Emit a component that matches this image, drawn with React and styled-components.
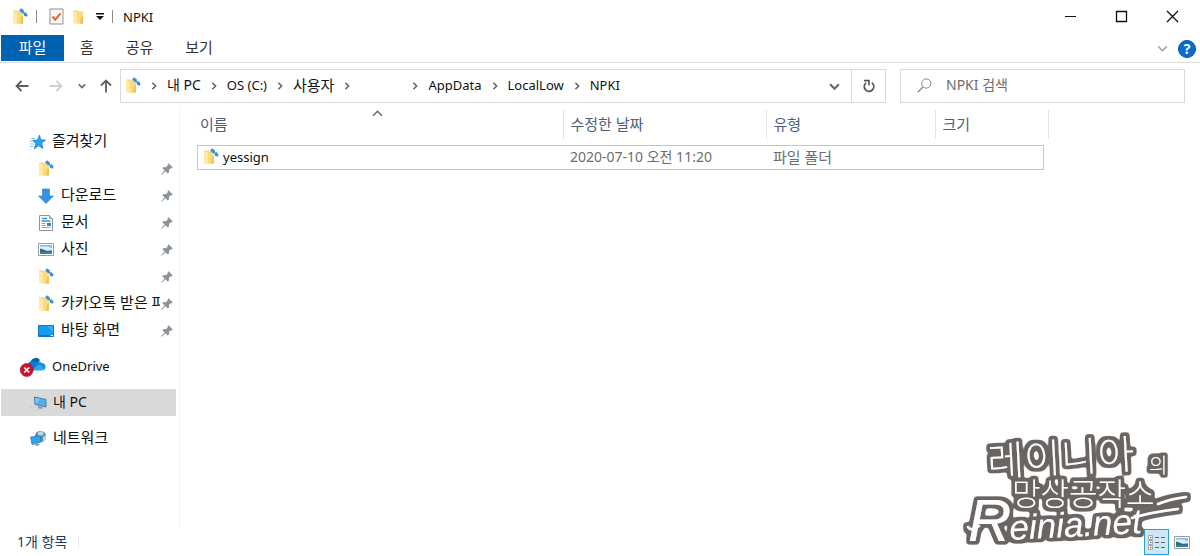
import React, { useState } from "react";
import styled, { createGlobalStyle } from "styled-components";

const GlobalStyle = createGlobalStyle`
  * {
    box-sizing: border-box;
  }

  body {
    margin: 0;
    background: #fff;
    color: #111;
    font-family: "Noto Sans", "Noto Sans CJK KR", sans-serif;
    font-size: 13px;
    line-height: 20px;
  }

  button {
    padding: 0;
    border: 0;
    background: none;
    color: inherit;
    font: inherit;
  }

  svg {
    display: block;
    flex: none;
  }
`;

const Explorer = styled.div`
  position: relative;
  display: flex;
  flex-direction: column;
  min-height: 100vh;
`;

// hangul is set larger than the latin text beside it
const Ko = styled.span`
  font-size: 15px;
`;

const Mixed = styled.span`
  font-size: 14px;
`;

const TitleBar = styled.header`
  display: flex;
  align-items: center;
  height: 35px;
  padding: 0 21px 2px 12px;
`;

const QuickTools = styled.div`
  display: flex;
  align-items: center;
  gap: 8px;
`;

const Separator = styled.span`
  width: 1px;
  height: 13px;
  margin-right: 4px;
  background: #8c8c8c;
`;

const Title = styled.h1`
  flex: 1;
  margin: 0 0 0 6px;
  font-size: 13px;
  font-weight: 400;
`;

const WindowButtons = styled.div`
  display: flex;
  gap: 38px;
`;

const Menu = styled.nav`
  display: flex;
  align-items: center;
  height: 28px;
  padding: 0 4px 0 1px;
  border-bottom: 1px solid #dcdcdc;
`;

const MenuTab = styled.button`
  align-self: flex-start;
  width: ${(p) => p.$width}px;
  height: 26px;
  padding-bottom: 2px;
  background: ${(p) => (p.$active ? "#0063b1" : "transparent")};
  color: ${(p) => (p.$active ? "#fff" : "#333")};
`;

const MenuRight = styled.div`
  display: flex;
  align-items: center;
  gap: 10px;
  margin-left: auto;
`;

const HelpButton = styled.button`
  width: 18px;
  height: 18px;
  border: 1px solid #07539c;
  border-radius: 50%;
  background: #0a6cce;
  color: #fff;
  font-size: 14px;
  font-weight: 700;
  line-height: 16px;
`;

const Toolbar = styled.div`
  display: flex;
  align-items: center;
  padding: 6px 15px 7px 5px;
`;

const History = styled.div`
  display: flex;
  align-items: center;
`;

const HistoryButton = styled.button`
  display: flex;
  justify-content: center;
  width: ${(p) => p.$width}px;
`;

const AddressBar = styled.div`
  display: flex;
  flex: 1;
  align-items: stretch;
  height: 34px;
  margin-right: 14px;
  border: 1px solid #d9d9d9;
`;

const Crumbs = styled.div`
  display: flex;
  flex: 1;
  align-items: center;
  padding: 0 0 2px 4px;
`;

const Crumb = styled.button`
  height: 24px;
  min-width: ${(p) => (p.$blank ? 42 : 0)}px;
  white-space: nowrap;
`;

const CrumbArrow = styled.span`
  display: flex;
  justify-content: center;
  width: 26px;
  padding-top: 2px;
`;

const AddressButton = styled.button`
  display: flex;
  align-items: center;
  justify-content: center;
  width: 34px;
  border-left: 1px solid ${(p) => (p.$divided ? "#d9d9d9" : "transparent")};
`;

const SearchBox = styled.label`
  display: flex;
  flex: 0 1 285px;
  align-items: center;
  gap: 14px;
  height: 34px;
  padding: 0 16px 2px;
  border: 1px solid #d9d9d9;
`;

const SearchInput = styled.input`
  flex: 1;
  min-width: 0;
  padding: 0;
  border: 0;
  outline: 0;
  font: inherit;
  font-size: 14px;

  &::placeholder {
    color: #6d6d6d;
    opacity: 1;
  }
`;

const Body = styled.div`
  display: flex;
  flex: 1;
`;

const Sidebar = styled.nav`
  display: flex;
  flex: none;
  flex-direction: column;
  gap: 9px;
  width: 180px;
  padding: 18px 3px 0 1px;
  border-right: 1px solid #f0f0f0;
`;

const TreeRow = styled.a`
  display: flex;
  align-items: center;
  gap: ${(p) => (p.$child ? 7 : 6)}px;
  height: 27px;
  padding-left: ${(p) => (p.$child ? 37 : 29)}px;
  padding-right: 3px;
  background: ${(p) => (p.$selected ? "#d9d9d9" : "transparent")};
  color: inherit;
  text-decoration: none;
`;

const TreeLabel = styled.span`
  flex: 1;
  margin-right: -6px;
  padding-bottom: 2px;
  overflow: hidden;
  white-space: nowrap;
`;

const CloudIcon = styled.span`
  margin-left: -10px;
`;

const Main = styled.main`
  flex: 1;
  min-width: 0;
  padding-left: 17px;
`;

const FileTable = styled.table`
  width: 851px;
  max-width: 100%;
  border-collapse: collapse;
  table-layout: fixed;
`;

const HeadCell = styled.th`
  position: relative;
  width: ${(p) => p.$width}px;
  height: 29px;
  padding: 0 0 1px ${(p) => (p.$first ? 3 : 7)}px;
  border-right: 1px solid #e3e3e3;
  color: #4c607a;
  font-size: 14px;
  font-weight: 400;
  text-align: left;
`;

const SortMark = styled.span`
  position: absolute;
  top: -2px;
  left: 48%;
`;

const Cell = styled.td`
  padding: 6px ${(p) => (p.$last ? 4 : 0)}px 0 0;
`;

const CellBox = styled.div`
  display: flex;
  align-items: center;
  gap: 4px;
  height: 25px;
  padding: 0 0 2px ${(p) => (p.$first ? 5 : 7)}px;
  border: solid #99d1ff;
  border-width: 1px ${(p) => (p.$last ? 1 : 0)}px 1px
    ${(p) => (p.$first ? 1 : 0)}px;
  color: ${(p) => (p.$first ? "#111" : "#6d6d6d")};
  font-size: ${(p) => (p.$first ? 13 : 14)}px;
`;

const StatusBar = styled.footer`
  display: flex;
  align-items: center;
  height: 28px;
  padding: 0 10px 0 17px;
`;

const Count = styled.span`
  padding-right: 11px;
  border-right: 1px solid #ececec;
  color: #1e395b;
  font-size: 14px;
  line-height: 14px;
`;

const ViewButtons = styled.div`
  display: flex;
  align-items: center;
  gap: 5px;
  margin-left: auto;
`;

const ViewButton = styled.button`
  display: flex;
  align-items: center;
  justify-content: center;
  width: ${(p) => (p.$active ? 25 : 16)}px;
  height: 26px;
  border: ${(p) => (p.$active ? "1px solid #26a0da" : "0")};
  background: ${(p) => (p.$active ? "#cbe8f6" : "transparent")};
`;

const Watermark = styled.svg`
  position: absolute;
  right: 8px;
  bottom: 6px;
  overflow: visible;
  pointer-events: none;
`;

const FolderIcon = ({ plain }) => (
  <svg width="16" height="17" viewBox="0 0 16 17">
    <path d="M1 2.5h5l1 1h4v12H3l-2-1z" fill="#f6d680" />
    <path d="M1 3l4 1.5V16L1 14.5z" fill="#ffe9a6" />
    <path d="M5 5h3.5L11 3.5v12H5z" fill="#fbdc7c" />
    <path d="M9 9l2-1v7.5H8z" fill="#eec255" />
    {!plain && (
      <g fill="#3d8fdc">
        <path d="M7 2.5L9 .3l3 2.2-.7 3L9.500 4.800z" />
        <path d="M11.500 5.500l2-1.500 2.300 3-1.500 1.700-2.300-.9z" />
        <path d="M10.500 3.500l3 3" stroke="#3d8fdc" strokeWidth="1.200" />
      </g>
    )}
  </svg>
);

const CheckIcon = () => (
  <svg width="15" height="17" viewBox="0 0 15 17">
    <path d="M1 1h13v15H1z" fill="#f7f7f7" stroke="#8f8f8f" />
    <path d="M3.5 8.5l2.7 3.2 5.3-6.4" fill="none" stroke="#e8622c" strokeWidth="2" />
  </svg>
);

const CustomizeIcon = () => (
  <svg width="8" height="7" viewBox="0 0 8 7">
    <path d="M0 0h8v1.5H0zM0 3h8L4 7z" fill="#111" />
  </svg>
);

const Chevron = ({ dir = "down", size = 9, color = "#666", weight = 1.5 }) => {
  const turn = { down: 0, left: 90, up: 180, right: -90 }[dir];
  return (
    <svg width={size} height={size} viewBox="0 0 10 10">
      <path
        d="M1 3l4 4 4-4"
        fill="none"
        stroke={color}
        strokeWidth={weight}
        transform={`rotate(${turn} 5 5)`}
      />
    </svg>
  );
};

const Arrow = ({ dir = "left", color = "#5e5e5e" }) => {
  const turn = { left: 0, up: 90, right: 180 }[dir];
  return (
    <svg width="14" height="14" viewBox="0 0 14 14">
      <path
        d="M13.5 7H1.5M6.5 2L1.5 7l5 5"
        fill="none"
        stroke={color}
        strokeWidth="1.8"
        transform={`rotate(${turn} 7 7)`}
      />
    </svg>
  );
};

const RefreshIcon = () => (
  <svg width="12" height="14" viewBox="0 0 12 14">
    <path d="M8.8 3.6A4.8 4.8 0 1 1 3 3.8" fill="none" stroke="#555" strokeWidth="1.7" />
    <path d="M1 1.6h5v5" fill="none" stroke="#555" strokeWidth="1.6" />
  </svg>
);

const SearchIcon = () => (
  <svg width="15" height="15" viewBox="0 0 15 15" fill="none" stroke="#888">
    <circle cx="9.3" cy="5.5" r="4.6" />
    <path d="M6 9l-5.3 5.2" strokeWidth="1.3" />
  </svg>
);

const PinIcon = () => (
  <svg width="12" height="12" viewBox="0 0 12 12">
    <path d="M7.5 0.2L11.8 4.5 10.5 5.4 9.7 5.2 8 7.100 8 9.6 6.8 10.6 4.400 8.200 0.8 11.8 0.2 11.200 3.600 7.400 1.4 5.200 2.500 4.100 5 4.2 6.800 2.300 6.600 1.200z" fill="#8a939c" />
  </svg>
);

const StarIcon = () => (
  <svg width="16" height="16" viewBox="0 0 16 16">
    <path d="M9.6 1l1.2 4.8 4.9.3-4 3 1.3 5.4-4.5-2.8L4.3 15l1.4-5.3L2.6 6.300l4.700-.3z" fill="#2ba0ec" stroke="#1583cf" strokeWidth=".7" />
    <path d="M1 4.500h4M0 7h3M0 10h4M0 12.500h4" stroke="#82c7f3" />
  </svg>
);

const DownloadIcon = () => (
  <svg width="16" height="16" viewBox="0 0 16 16">
    <path d="M4.500 1h7v7h4L8 15.500.5 8h4z" fill="#3592e0" stroke="#277fca" strokeWidth=".6" />
  </svg>
);

const DocumentIcon = () => (
  <svg width="16" height="16" viewBox="0 0 16 16">
    <path d="M1.500.5h10l3 3v12h-13z" fill="#fff" stroke="#8e969d" />
    <path d="M11.500.5v3h3" fill="#dce2e7" stroke="#8e969d" />
    <path d="M4 3.500h5M3.500 6h9" stroke="#3e94d4" strokeWidth="1.500" />
    <path d="M3.500 8.500h4M3.500 10.500h4M3.500 12.500h9" stroke="#8fa7ba" />
    <path d="M9 8h4v3H9z" fill="#3a83bd" />
  </svg>
);

const PictureIcon = () => (
  <svg width="16" height="13" viewBox="0 0 16 13">
    <path d="M.5.5h15v12H.5z" fill="#fff" stroke="#9b9b9b" />
    <path d="M2 2h12v9H2z" fill="#7fbdf0" />
    <path d="M2 3.500h8l4 2v2H2z" fill="#dceefa" />
    <path d="M2 5.500l3.500 1 3 1.500 5.500-.5V11H2z" fill="#356d67" />
    <path d="M2 9.300l12-.8V11H2z" fill="#397db5" />
  </svg>
);

const DesktopIcon = () => (
  <svg width="16" height="12" viewBox="0 0 16 12">
    <path d="M.5.5h15v11H.5z" fill="#139cf0" stroke="#1277bd" />
    <path d="M9 1h6v7z" fill="#35aff8" />
    <path d="M1 10.500h11" stroke="#0b78c7" />
    <path d="M12.500 10.500h2.500" stroke="#d9efff" />
  </svg>
);

const OneDriveIcon = () => (
  <svg width="26" height="20" viewBox="0 0 26 20">
    <path d="M8 8.500a4 4 0 0 1 2.500-4A5.500 5.500 0 0 1 20 3l-4 6-6 4z" fill="#0364b8" />
    <path d="M10 5.500a6 6 0 0 1 6-.5l4.500 2.700L13 13.500H8z" fill="#0f78d4" />
    <path d="M16 5.300A4.500 4.500 0 0 1 21.500 6a4 4 0 0 1 4 4 3.500 3.500 0 0 1-1 2.500z" fill="#1490df" />
    <path d="M11 13.500l7.500-5.800 6.500 4a3.500 3.500 0 0 1-2.500 1.800z" fill="#28a8ea" />
    <circle cx="6.700" cy="13" r="6.500" fill="#d0112b" stroke="#a70b20" strokeWidth=".6" />
    <path d="M4.200 10.500l5 5M9.200 10.500l-5 5" stroke="#fff" strokeWidth="1.600" />
  </svg>
);

const ComputerIcon = () => (
  <svg width="17" height="16" viewBox="0 0 17 16">
    <path d="M4.500 2l11.500 2.500v7.500L5 9.500z" fill="#4fb0ee" stroke="#3b6f91" strokeWidth=".8" />
    <path d="M5 2.800l5 1.200L6 9z" fill="#7cc8f6" />
    <path d="M9 11l4 1.400-1.500 1.600-4-1z" fill="#8a969e" />
    <path d="M0 12.500l6.500 2.500 3-.8L3 12z" fill="#edf1f4" stroke="#b4bcc2" strokeWidth=".6" />
  </svg>
);

const NetworkIcon = () => (
  <svg width="17" height="17" viewBox="0 0 17 17">
    <circle cx="10.500" cy="6.500" r="5.700" fill="#5592b8" />
    <path d="M8 2l4-1 2 3-3 2-3-1zM13 7l3-2v4l-3 3z" fill="#b9d7e5" />
    <path d="M0.500 7l10-1.200v6.500L2 14.500z" fill="#2aa4ef" stroke="#3c779e" strokeWidth=".7" />
    <path d="M5 14l3-.6 2 1.400-4 1.500z" fill="#8d9ba5" />
  </svg>
);

const DetailsIcon = () => (
  <svg width="18" height="15" viewBox="0 0 18 15">
    {[0, 5, 10].map((y) => (
      <g key={y}>
        <path d={`M.5 ${y + 0.500}h4v4h-4z`} fill="#fff" stroke="#a7a7a7" />
        <path d={`M2 ${y + 2.500}h1.500`} stroke={y === 5 ? "#4b94c9" : "#c45b4d"} strokeWidth="1.500" />
        <path d={`M7 ${y + 2.500}h4M13 ${y + 2.500}h4`} stroke="#666" />
      </g>
    ))}
  </svg>
);

const menuTabs = [
  { label: "파일", width: 63 },
  { label: "홈", width: 46 },
  { label: "공유", width: 59 },
  { label: "보기", width: 60 },
];

const favorites = [
  { label: "", icon: <FolderIcon />, alt: "폴더" },
  { label: "다운로드", icon: <DownloadIcon /> },
  { label: "문서", icon: <DocumentIcon /> },
  { label: "사진", icon: <PictureIcon /> },
  { label: "", icon: <FolderIcon />, alt: "폴더" },
  { label: "카카오톡 받은 파", icon: <FolderIcon /> },
  { label: "바탕 화면", icon: <DesktopIcon /> },
];

const crumbs = [
  <Mixed>내 PC</Mixed>,
  "OS (C:)",
  <Ko>사용자</Ko>,
  "",
  "AppData",
  "LocalLow",
  "NPKI",
];

function App() {
  const [activeTab, setActiveTab] = useState("파일");
  const [search, setSearch] = useState("");
  const [view, setView] = useState("details");

  return (
    <Explorer>
      <GlobalStyle />
      <TitleBar>
        <QuickTools>
          <FolderIcon />
          <Separator />
          <button aria-label="속성"><CheckIcon /></button>
          <button aria-label="새 폴더"><FolderIcon plain /></button>
          <button aria-label="사용자 지정"><CustomizeIcon /></button>
          <Separator />
        </QuickTools>
        <Title>NPKI</Title>
        <WindowButtons>
          <button aria-label="최소화">
            <svg width="13" height="13"><path d="M1 6.500h11" stroke="#111" /></svg>
          </button>
          <button aria-label="최대화">
            <svg width="13" height="13"><path d="M1.500 1.500h10v10h-10z" fill="none" stroke="#111" strokeWidth="1.300" /></svg>
          </button>
          <button aria-label="닫기">
            <svg width="13" height="13"><path d="M1 1l11 11M12 1L1 12" stroke="#111" strokeWidth="1.300" /></svg>
          </button>
        </WindowButtons>
      </TitleBar>

      <Menu>
        {menuTabs.map((t) => (
          <MenuTab
            key={t.label}
            $width={t.width}
            $active={activeTab === t.label}
            onClick={() => setActiveTab(t.label)}
          >
            <Ko>{t.label}</Ko>
          </MenuTab>
        ))}
        <MenuRight>
          <button aria-label="리본 확장"><Chevron size={11} color="#aaa" /></button>
          <HelpButton>?</HelpButton>
        </MenuRight>
      </Menu>

      <Toolbar>
        <History>
          <HistoryButton $width={34} aria-label="뒤로"><Arrow /></HistoryButton>
          <HistoryButton $width={34} aria-label="앞으로"><Arrow dir="right" color="#d0d0d0" /></HistoryButton>
          <HistoryButton $width={18} aria-label="최근 위치"><Chevron weight={2} size={8} /></HistoryButton>
          <HistoryButton $width={29} aria-label="위로"><Arrow dir="up" /></HistoryButton>
        </History>
        <AddressBar>
          <Crumbs>
            <FolderIcon />
            {crumbs.map((c, i) => (
              <React.Fragment key={i}>
                <CrumbArrow><Chevron dir="right" size={8} weight={2} /></CrumbArrow>
                <Crumb $blank={c === ""} aria-label={c === "" ? "폴더" : undefined}>{c}</Crumb>
              </React.Fragment>
            ))}
          </Crumbs>
          <AddressButton aria-label="이전 위치"><Chevron size={11} weight={2} /></AddressButton>
          <AddressButton $divided aria-label="새로 고침"><RefreshIcon /></AddressButton>
        </AddressBar>
        <SearchBox>
          <SearchIcon />
          <SearchInput
            type="text"
            aria-label="NPKI 검색"
            placeholder="NPKI 검색"
            value={search}
            onChange={(e) => setSearch(e.target.value)}
          />
        </SearchBox>
      </Toolbar>

      <Body>
        <Sidebar>
          <div>
            <TreeRow href="#favorites">
              <StarIcon />
              <TreeLabel><Ko>즐겨찾기</Ko></TreeLabel>
            </TreeRow>
            {favorites.map((f, i) => (
              <TreeRow key={i} href={`#favorite-${i}`} $child aria-label={f.alt}>
                {f.icon}
                <TreeLabel><Ko>{f.label}</Ko></TreeLabel>
                <PinIcon />
              </TreeRow>
            ))}
          </div>
          <TreeRow href="#onedrive">
            <CloudIcon><OneDriveIcon /></CloudIcon>
            <TreeLabel>OneDrive</TreeLabel>
          </TreeRow>
          <TreeRow href="#pc" $selected>
            <ComputerIcon />
            <TreeLabel><Mixed>내 PC</Mixed></TreeLabel>
          </TreeRow>
          <TreeRow href="#network">
            <NetworkIcon />
            <TreeLabel><Ko>네트워크</Ko></TreeLabel>
          </TreeRow>
        </Sidebar>

        <Main>
          <FileTable>
            <thead>
              <tr>
                <HeadCell $first $width={366}>
                  <Ko>이름</Ko>
                  <SortMark><Chevron dir="up" size={11} weight={1.3} /></SortMark>
                </HeadCell>
                <HeadCell $width={203}><Ko>수정한 날짜</Ko></HeadCell>
                <HeadCell $width={169}><Ko>유형</Ko></HeadCell>
                <HeadCell $width={113}><Ko>크기</Ko></HeadCell>
              </tr>
            </thead>
            <tbody>
              <tr>
                <Cell><CellBox $first><FolderIcon />yessign</CellBox></Cell>
                <Cell><CellBox>2020-07-10 오전 11:20</CellBox></Cell>
                <Cell><CellBox><Ko>파일 폴더</Ko></CellBox></Cell>
                <Cell $last><CellBox $last /></Cell>
              </tr>
            </tbody>
          </FileTable>
        </Main>
      </Body>

      <StatusBar>
        <Count>1개 항목</Count>
        <ViewButtons>
          <ViewButton
            aria-label="자세히"
            $active={view === "details"}
            onClick={() => setView("details")}
          >
            <DetailsIcon />
          </ViewButton>
          <ViewButton
            aria-label="큰 아이콘"
            $active={view === "large"}
            onClick={() => setView("large")}
          >
            <PictureIcon />
          </ViewButton>
        </ViewButtons>
      </StatusBar>

      <Watermark width="230" height="118" viewBox="0 0 230 118">
        <defs>
          {/* one grey rim round all of the lettering */}
          <filter id="rim" x="-10%" y="-10%" width="120%" height="120%">
            <feMorphology in="SourceAlpha" operator="dilate" radius="3" />
            <feGaussianBlur stdDeviation="1.500" />
            <feComponentTransfer result="spread">
              <feFuncA type="linear" slope="4" intercept="-0.800" />
            </feComponentTransfer>
            <feFlood floodColor="#6b6563" />
            <feComposite in2="spread" operator="in" />
            <feComposite in="SourceGraphic" operator="over" />
          </filter>
        </defs>
        <g
          filter="url(#rim)"
          fill="#fff"
          fontFamily='"Noto Sans CJK KR", sans-serif'
        >
          <text x="26" y="44" fontSize="40" fontWeight="300" transform="rotate(-3 26 44)">레이니아</text>
          <text x="187" y="41" fontSize="20" fontWeight="300">의</text>
          <text x="50" y="73" fontSize="31" fontWeight="300">망상공작소</text>
          <g fontFamily='"Liberation Sans", sans-serif' fontStyle="italic">
            <text x="6" y="109" fontSize="60">R</text>
            <text x="48" y="108" fontSize="35" transform="rotate(-3 48 108)">einia.net</text>
          </g>
          <g fill="none" stroke="#fff" strokeWidth="2.500" strokeLinecap="round">
            <path d="M196 72Q208 67 224 65" />
            <path d="M170 86Q190 80 216 77" />
            <path d="M6 95Q9 100 17 94" />
          </g>
        </g>
      </Watermark>
    </Explorer>
  );
}

export default App;
